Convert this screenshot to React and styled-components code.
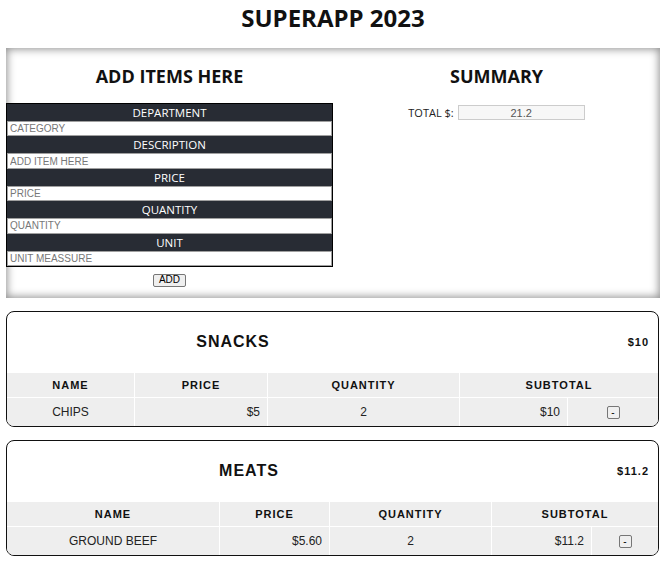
import styled, { createGlobalStyle } from "styled-components";

const GlobalStyle = createGlobalStyle`
  body {
    margin: 0;
    background: #fff;
    font-family: "Open Sans", "Noto Sans", sans-serif;
    color: #111;
  }
`;

const fields = [
  { label: "DEPARTMENT", placeholder: "CATEGORY" },
  { label: "DESCRIPTION", placeholder: "ADD ITEM HERE" },
  { label: "PRICE", placeholder: "PRICE" },
  { label: "QUANTITY", placeholder: "QUANTITY" },
  { label: "UNIT", placeholder: "UNIT MEASSURE" },
];

const categories = [
  {
    name: "SNACKS",
    total: "$10",
    cols: [127, 133, 192, 108, 91],
    items: [{ name: "CHIPS", price: "$5", qty: 2, subtotal: "$10" }],
  },
  {
    name: "MEATS",
    total: "$11.2",
    cols: [212, 110, 162, 100, 67],
    items: [{ name: "GROUND BEEF", price: "$5.60", qty: 2, subtotal: "$11.2" }],
  },
];

export default function App() {
  return (
    <Page>
      <GlobalStyle />
      <Title>SUPERAPP 2023</Title>
      <Panel>
        <Column>
          <Heading>ADD ITEMS HERE</Heading>
          <Form>
            {fields.map((f) => (
              <Field key={f.label}>
                <FieldLabel>{f.label}</FieldLabel>
                <FieldInput placeholder={f.placeholder} />
              </Field>
            ))}
          </Form>
          <ButtonRow>
            <SmallButton>ADD</SmallButton>
          </ButtonRow>
        </Column>
        <Column>
          <Heading>SUMMARY</Heading>
          <TotalRow>
            <TotalLabel>TOTAL $:</TotalLabel>
            <TotalInput value="21.2" readOnly />
          </TotalRow>
        </Column>
      </Panel>
      {categories.map((cat) => (
        <Card key={cat.name}>
          <Table>
            <colgroup>
              {cat.cols.map((w, i) => (
                <col key={i} style={{ width: w }} />
              ))}
            </colgroup>
            <thead>
              <tr>
                <CategoryName colSpan={3}>{cat.name}</CategoryName>
                <CategoryTotal colSpan={2}>{cat.total}</CategoryTotal>
              </tr>
              <tr>
                <HeadCell>NAME</HeadCell>
                <HeadCell>PRICE</HeadCell>
                <HeadCell>QUANTITY</HeadCell>
                <HeadCell colSpan={2}>SUBTOTAL</HeadCell>
              </tr>
            </thead>
            <tbody>
              {cat.items.map((item) => (
                <tr key={item.name}>
                  <Cell>{item.name}</Cell>
                  <Cell $align="right">{item.price}</Cell>
                  <Cell>{item.qty}</Cell>
                  <Cell $align="right">{item.subtotal}</Cell>
                  <Cell>
                    <RemoveButton>-</RemoveButton>
                  </Cell>
                </tr>
              ))}
            </tbody>
          </Table>
        </Card>
      ))}
    </Page>
  );
}

const Page = styled.div`
  padding: 0 12px 10px 6px;
`;

const Title = styled.h1`
  margin: 2px 0 0;
  text-align: center;
  font-size: 24px;
  line-height: 32px;
  font-weight: 700;
`;

const Panel = styled.section`
  margin-top: 14px;
  display: grid;
  grid-template-columns: 1fr 1fr;
  padding-bottom: 11px;
  box-shadow: inset 0 0 9px 1px rgba(0, 0, 0, 0.45);
`;

const Column = styled.div`
  display: flex;
  flex-direction: column;
`;

const Heading = styled.h2`
  margin: 16px 0 15px;
  text-align: center;
  font-size: 18px;
  line-height: 24px;
  font-weight: 700;
`;

const Form = styled.div`
  background: #282c34;
  border: 1px solid #000;
`;

const Field = styled.div`
  display: flex;
  flex-direction: column;
`;

const FieldLabel = styled.label`
  color: #fff;
  text-align: center;
  font-size: 11.5px;
  line-height: 17px;
`;

const FieldInput = styled.input`
  box-sizing: border-box;
  width: 100%;
  height: 15.4px;
  margin: 0;
  padding: 0 2px;
  border: 1px solid #a0a0a0;
  background: #fff;
  font-family: "Liberation Sans", Arial, sans-serif;
  font-size: 10px;
  outline: none;
  &::placeholder {
    color: #777;
  }
`;

const ButtonRow = styled.div`
  margin-top: 7px;
  display: flex;
  justify-content: center;
`;

const SmallButton = styled.button`
  height: 13px;
  padding: 0 5px;
  border: 1px solid #767676;
  border-radius: 2px;
  background: #efefef;
  font-family: "Liberation Sans", Arial, sans-serif;
  font-size: 10px;
  line-height: 10px;
  color: #000;
`;

const TotalRow = styled.div`
  margin-top: 2px;
  display: flex;
  justify-content: center;
  align-items: center;
  gap: 4px;
`;

const TotalLabel = styled.span`
  font-size: 11px;
  color: #222;
`;

const TotalInput = styled.input`
  box-sizing: border-box;
  width: 127px;
  height: 15px;
  padding: 0;
  border: 1px solid #ccc;
  background: #f7f7f7;
  text-align: center;
  font-family: "Liberation Sans", Arial, sans-serif;
  font-size: 11px;
  color: #555;
  outline: none;
`;

const Card = styled.div`
  margin-top: 13px;
  margin-right: 1px;
  border: 1px solid #111;
  border-radius: 8px;
  overflow: hidden;
`;

const Table = styled.table`
  width: 100%;
  table-layout: fixed;
  border-collapse: separate;
  border-spacing: 0;
  font-family: "Liberation Sans", Arial, sans-serif;
  color: #222;
`;

const CategoryName = styled.th`
  height: 61px;
  padding: 0;
  text-align: center;
  font-size: 16px;
  font-weight: 700;
  letter-spacing: 1px;
  color: #111;
`;

const CategoryTotal = styled.th`
  padding: 0 9px 0 0;
  text-align: right;
  font-size: 11px;
  font-weight: 700;
  letter-spacing: 1px;
  color: #111;
`;

const HeadCell = styled.th`
  height: 24px;
  padding: 0;
  background: #eee;
  text-align: center;
  font-size: 11px;
  font-weight: 700;
  letter-spacing: 1px;
  color: #111;
  & + & {
    border-left: 1px solid #fff;
  }
`;

const Cell = styled.td`
  height: 28px;
  padding: 0 7px;
  background: #eee;
  border-top: 1px solid #fff;
  text-align: ${(p) => p.$align || "center"};
  font-size: 12px;
  & + & {
    border-left: 1px solid #fff;
  }
`;

const RemoveButton = styled.button`
  width: 13px;
  height: 13px;
  padding: 0;
  border: 1px solid #767676;
  border-radius: 2px;
  background: #efefef;
  font-family: "Liberation Sans", Arial, sans-serif;
  font-size: 10px;
  line-height: 10px;
  color: #000;
  vertical-align: middle;
`;
